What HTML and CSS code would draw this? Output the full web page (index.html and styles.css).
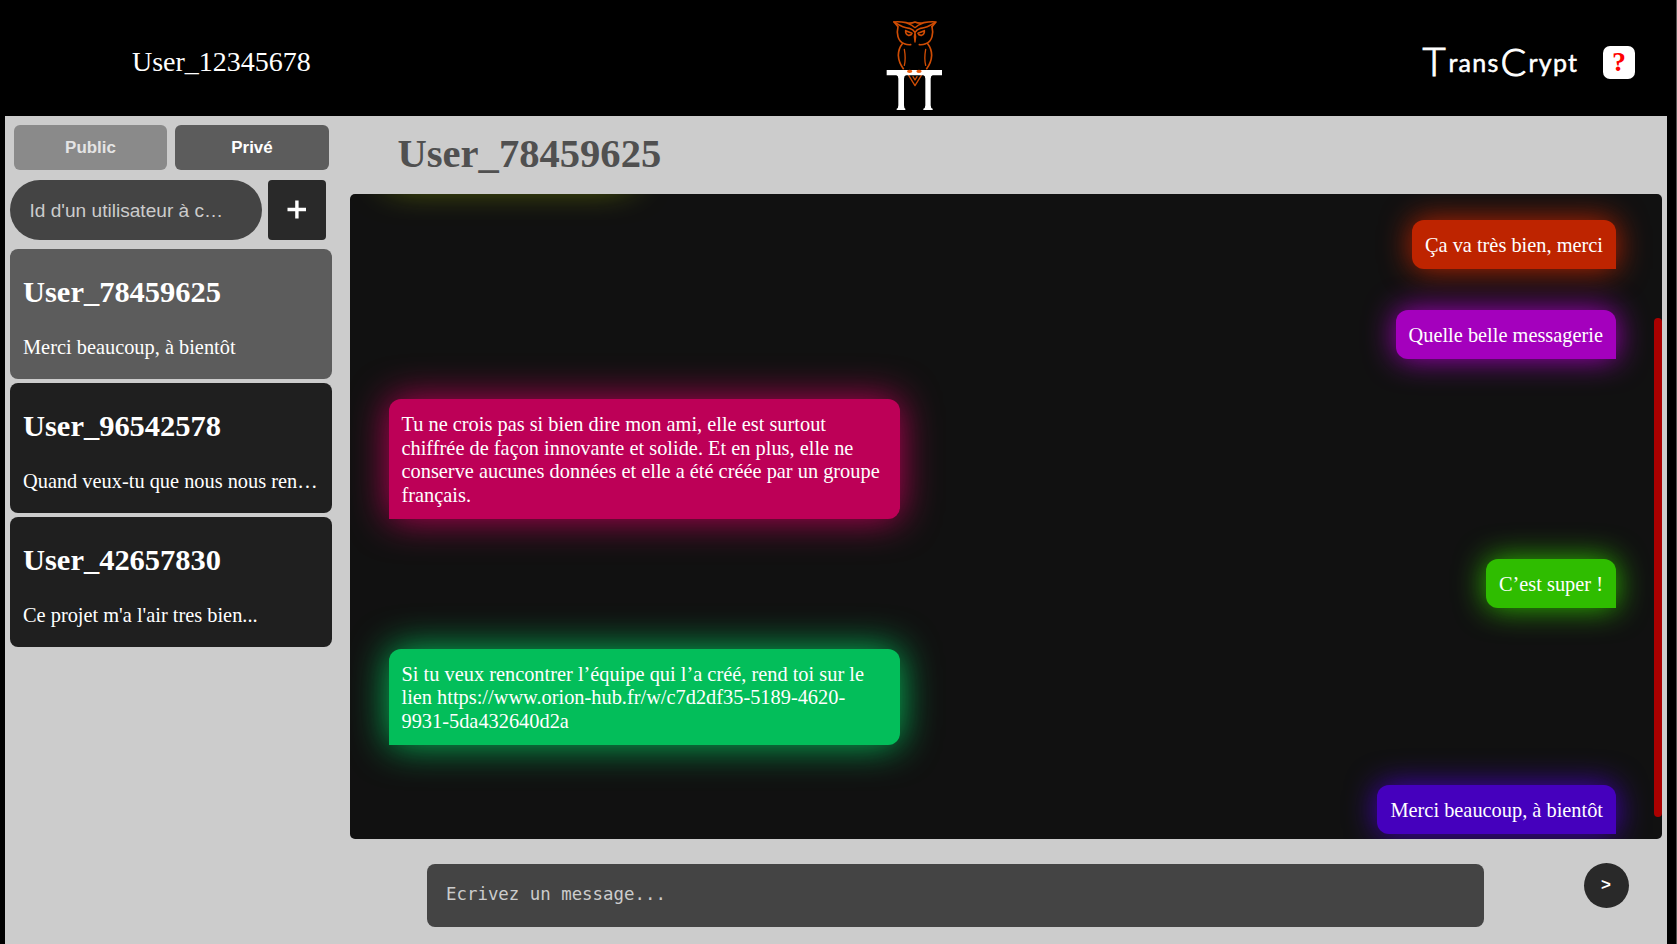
FILE: index.html
```html
<!DOCTYPE html>
<html lang="fr">
<head>
<meta charset="utf-8">
<title>TransCrypt</title>
<link rel="stylesheet" href="styles.css">
</head>
<body>
<header class="topbar">
  <div class="me">User_12345678</div>
  <svg class="logo" viewBox="0 0 270 330" width="90" height="110" fill="none">
    <g stroke="#cf4c04" stroke-width="5" stroke-linejoin="round" stroke-linecap="round">
      <path d="M72 36 Q88 34 108 38 Q122 42 135 36 Q148 42 162 38 Q182 34 198 36 L186 50"/>
      <path d="M72 36 L84 50 Q80 66 84 80 Q88 96 103 101 Q112 105 122 104"/>
      <path d="M186 50 Q190 66 186 80 Q182 96 167 101 Q158 105 148 104"/>
      <path d="M76 38 Q100 54 118 55 Q130 59 135 67 Q140 59 152 55 Q170 54 194 38"/>
      <path d="M112 40 Q126 44 135 53 Q144 44 158 40" stroke-width="4"/>
      <path d="M107 62 L126 70 Q124 77 115 76 Q106 73 107 62 Z M163 62 L144 70 Q146 77 155 76 Q164 73 163 62 Z" stroke-width="5"/>
      <path d="M135 68 L133 80 L135 96 L137 80 Z" stroke-width="4"/>
      <path d="M97 101 Q85 116 85 136 Q86 158 100 176 M173 101 Q185 116 185 136 Q184 158 170 176"/>
      <path d="M103 118 Q108 146 103 166 M167 118 Q162 146 167 166" stroke-width="4"/>
      <path d="M116 196 L135 227 L154 196 M129 200 L135 210 L141 200" stroke-width="4"/>
    </g>
    <path fill="#fff" d="M50 180 H216 V196 H188 Q182 197 182 206 V286 Q182 295 188 296 V300 H160 V296 Q166 295 166 286 V206 Q166 197 160 196 H108 Q102 197 102 206 V286 Q102 295 106 296 V300 H80 V296 Q85 295 85 286 V206 Q85 197 79 196 H50 Z"/>
    <ellipse cx="119" cy="184" rx="8" ry="5" fill="#f05a0a"/>
    <ellipse cx="147" cy="184" rx="8" ry="5" fill="#f05a0a"/>
  </svg>
  <div class="brand"><span class="big t">T</span><span class="small">rans</span><span class="big c">C</span><span class="small">rypt</span></div>
  <button class="help">?</button>
</header>
<main class="app">
  <aside class="side">
    <div class="tabs"><button class="tab">Public</button><button class="tab active">Privé</button></div>
    <div class="search"><div class="field">Id d'un utilisateur à c…</div><button class="add"><svg width="20" height="20" viewBox="0 0 20 20"><path d="M0.5 9.5H19M9.9 0.5V18.5" stroke="#fff" stroke-width="3.4"/></svg></button></div>
    <div class="convs">
      <section class="conv selected"><h2>User_78459625</h2><p>Merci beaucoup, à bientôt</p></section>
      <section class="conv"><h2>User_96542578</h2><p>Quand veux-tu que nous nous ren…</p></section>
      <section class="conv"><h2>User_42657830</h2><p>Ce projet m'a l'air tres bien...</p></section>
    </div>
  </aside>
  <section class="chat">
    <h1>User_78459625</h1>
    <div class="panel">
      <div class="msg in olive"></div>
      <div class="msg out red">Ça va très bien, merci</div>
      <div class="msg out purple">Quelle belle messagerie</div>
      <div class="msg in pink">Tu ne crois pas si bien dire mon ami, elle est surtout chiffrée de façon innovante et solide. Et en plus, elle ne conserve aucunes données et elle a été créée par un groupe français.</div>
      <div class="msg out green">C’est super !</div>
      <div class="msg in emerald">Si tu veux rencontrer l’équipe qui l’a créé, rend toi sur le lien https://www.orion-hub.fr/w/c7d2df35-5189-4620-9931-5da432640d2a</div>
      <div class="msg out indigo">Merci beaucoup, à bientôt</div>
      <div class="thumb"></div>
    </div>
    <div class="compose"><div class="entry">Ecrivez un message...</div><button class="send">&gt;</button></div>
  </section>
</main>
</body>
</html>
```
FILE: styles.css
```css
* { box-sizing: border-box; }
body {
  margin: 0;
  height: 944px;
  overflow: hidden;
  border-right: 1px solid #555;
  background: #000;
  color: #fff;
  font: 20.38px "Liberation Serif", "Times New Roman", serif;
}
button { border: 0; padding: 0; color: #fff; font: bold 16.93px "Liberation Sans", Arial, sans-serif; }
h1, h2, p { margin: 0; }

.topbar { display: flex; height: 116px; align-items: flex-start; }
.me { width: 738px; margin-left: 132px; padding-top: 46px; font-size: 28px; line-height: 32px; }
.logo { display: block; flex: none; margin-top: 10px; }
.brand {
  display: flex;
  align-items: baseline;
  width: 180px;
  margin-left: 462.5px;
  padding-top: 36px;
  font-family: Papyrus, Lato, sans-serif;
  line-height: 42px;
}
.big { font-size: 38px; font-weight: 300; -webkit-text-stroke: 1px #fff; position: relative; top: 4px; }
.t { width: 26px; font-size: 40px; }
.c { width: 28px; }
.small { font-size: 25px; width: 52px; letter-spacing: 1.2px; -webkit-text-stroke: 0.5px #fff; }
.help {
  width: 32px;
  height: 33px;
  margin-top: 45.5px;
  margin-left: 0.5px;
  padding-bottom: 2px;
  border-radius: 7px;
  background: #fff;
  color: #f00;
  font: bold 28px/31px "Liberation Serif", "Times New Roman", serif;
}

.app { display: flex; width: 1662px; height: 828px; margin-left: 5px; background: #ccc; }
.side { width: 345px; padding: 9px 0 0 5px; }
.tabs { display: flex; gap: 8px; padding-left: 4px; }
.tab { width: 153px; height: 45px; border-radius: 6px; background: #8a8a8a; color: #e4e4e4; }
.tab.active { width: 154px; background: #5c5c5c; color: #fff; }
.search { display: flex; gap: 6px; margin-top: 10px; }
.field {
  width: 252px;
  height: 60px;
  padding-left: 19.5px;
  border-radius: 30px;
  background: #444;
  color: #ccc;
  font: 19.1px/62px "Liberation Sans", Arial, sans-serif;
}
.add { display: flex; width: 58px; height: 60px; align-items: center; justify-content: center; border-radius: 4px; background: #292929; }
.convs { display: flex; flex-direction: column; gap: 4.4px; margin-top: 9.4px; }
.conv { width: 322px; height: 129.6px; padding: 26px 13px 0; border-radius: 8px; background: #1f1f1f; }
.conv.selected { background: #5c5c5c; }
.conv h2 { font-size: 30.48px; line-height: 35px; }
.conv p { margin-top: 25.5px; line-height: 23px; white-space: nowrap; }

.chat { width: 1312px; }
.chat h1 { height: 78.4px; padding: 15px 0 0 47.5px; color: #505050; font-size: 40.6px; line-height: 46px; }
.panel {
  position: relative;
  display: flex;
  flex-direction: column;
  justify-content: flex-end;
  gap: 40.5px;
  height: 644.6px;
  padding: 0 46px 4.7px 38.5px;
  overflow: hidden;
  border-radius: 5px;
  background: #111;
}
.msg {
  flex: none;
  max-width: 511px;
  padding: 13.8px 13px 11.8px;
  line-height: 23.45px;
  background: var(--c);
}
.in { align-self: flex-start; border-radius: 12px 12px 12px 0; box-shadow: 0 0 38px var(--c); }
.out { align-self: flex-end; border-radius: 12px 12px 0 12px; box-shadow: 0 0 31px var(--c); }
.olive { --c: #90a800; width: 242px; height: 49px; }
.red { --c: #be2400; }
.purple { --c: #a400bd; }
.pink { --c: #bd0057; }
.green { --c: #2fbd00; }
.emerald { --c: #03be5a; }
.indigo { --c: #4500bd; }
.thumb { position: absolute; top: 123.3px; right: 0; width: 8.5px; height: 499.5px; border-radius: 4px; background: #a00; }

.compose { display: flex; padding: 25px 0 0 76.5px; }
.entry {
  width: 1057px;
  height: 63px;
  padding-left: 19.5px;
  border-radius: 8px;
  background: #444;
  color: #ccc;
  font: 17.4px/60px "DejaVu Sans Mono", monospace;
}
.send { width: 45px; height: 45px; margin-left: 100px; margin-top: -0.5px; padding-bottom: 1px; border-radius: 50%; background: #292929; }
```
